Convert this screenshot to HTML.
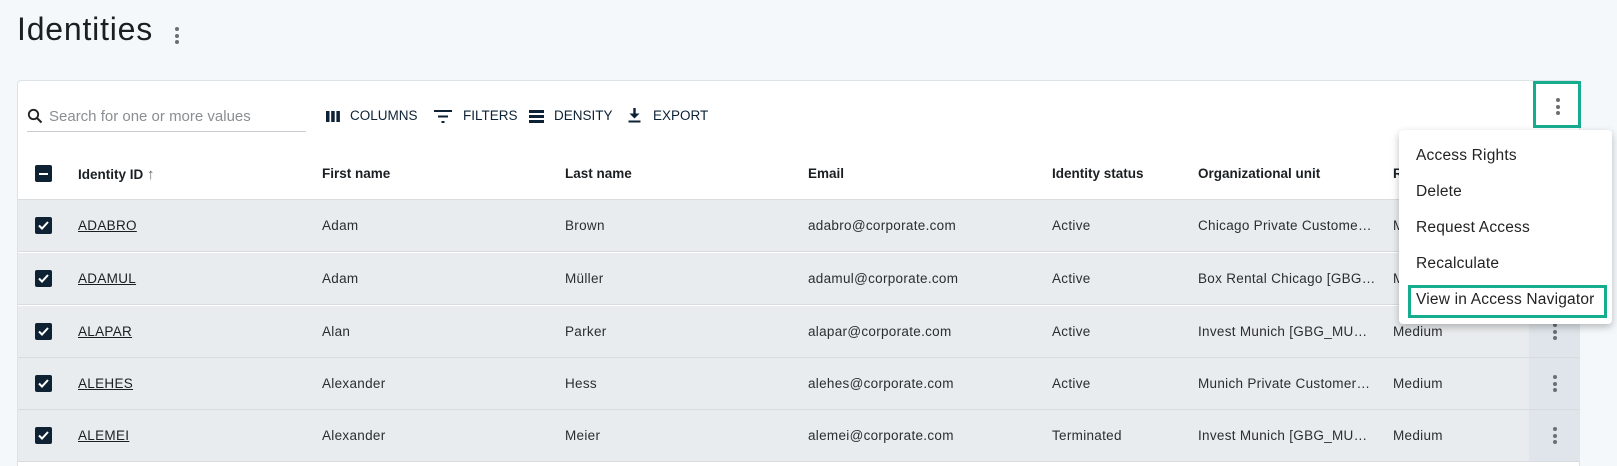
<!DOCTYPE html>
<html><head><style>
*{box-sizing:border-box;margin:0;padding:0}
html,body{width:1617px;height:466px;overflow:hidden}
body{background:#f4f8fb;font-family:"Liberation Sans",sans-serif;color:#1f2428;position:relative}
.abs{position:absolute}
h1{position:absolute;left:17px;top:11px;font-size:32px;font-weight:400;color:#1b1f22;letter-spacing:0.8px}
.card{position:absolute;left:17px;top:80px;width:1563px;height:390px;background:#fff;border:1px solid #dde2e6;border-radius:4px;overflow:hidden}
.dots{position:absolute;width:4px}
.dots i{display:block;width:4px;height:4px;border-radius:2px;background:#6b6f73;margin-bottom:2.5px}
.tb{position:absolute;top:108px;font-size:13.5px;color:#0d2235;letter-spacing:0}
.row{position:absolute;left:18px;width:1562px;height:52px;background:#e9ecee;border-bottom:1px solid #d8dcdf}
.c{position:absolute;font-size:13.5px;color:#2a2e31;top:18px;white-space:nowrap;letter-spacing:0.3px}
.hd{position:absolute;top:166px;font-size:13.5px;font-weight:bold;color:#1b1f22}
.cb{position:absolute;left:17px;top:17px;width:17px;height:17px;background:#0e2234;border-radius:2px}
.act{position:absolute;left:1511px;top:0;width:51px;height:51px;background:#dfe5ea}
.menu{position:absolute;left:1399px;top:130px;width:213px;height:194px;background:#fff;border-radius:4px;box-shadow:0 3px 8px rgba(0,0,0,.25)}
.menu div{position:absolute;left:17px;font-size:15.5px;color:#222;letter-spacing:0.2px}
</style></head><body>
<h1>Identities</h1>
<div class="dots" style="left:175px;top:27px"><i></i><i></i><i></i></div>
<div class="card"></div>
<svg class="abs" style="left:27px;top:108px" width="16" height="16" viewBox="0 0 16 16"><circle cx="6.5" cy="6.5" r="4.7" fill="none" stroke="#222" stroke-width="1.8"/><path d="M10 10l4.5 4.5" stroke="#222" stroke-width="2"/></svg>
<div class="abs" style="left:49px;top:108px;font-size:15px;color:#8a8e92">Search for one or more values</div>
<div class="abs" style="left:27px;top:131px;width:279px;height:1px;background:#c9cdd1"></div>
<svg class="abs" style="left:326px;top:111px" width="14" height="11"><rect x="0" y="0" width="3.5" height="11" fill="#0d2235"/><rect x="5.2" y="0" width="3.5" height="11" fill="#0d2235"/><rect x="10.4" y="0" width="3.5" height="11" fill="#0d2235"/></svg>
<div class="tb" style="left:350px">COLUMNS</div>
<svg class="abs" style="left:434px;top:110px" width="18" height="13"><rect x="0" y="0" width="18" height="2" fill="#0d2235"/><rect x="4" y="5.5" width="10" height="2" fill="#0d2235"/><rect x="7.5" y="11" width="3" height="2" fill="#0d2235"/></svg>
<div class="tb" style="left:463px">FILTERS</div>
<svg class="abs" style="left:529px;top:110px" width="15" height="13"><rect x="0" y="0" width="15" height="3" fill="#0d2235"/><rect x="0" y="5" width="15" height="3" fill="#0d2235"/><rect x="0" y="10" width="15" height="3" fill="#0d2235"/></svg>
<div class="tb" style="left:554px">DENSITY</div>
<svg class="abs" style="left:628px;top:108px" width="13" height="15"><path d="M6.5 0v8" stroke="#0d2235" stroke-width="2.4"/><path d="M1.5 5.5l5 5 5-5z" fill="#0d2235"/><rect x="0.5" y="12.5" width="12" height="2" fill="#0d2235"/></svg>
<div class="tb" style="left:653px">EXPORT</div>
<div class="abs" style="left:1533px;top:81px;width:48px;height:47px;border:3px solid #16ad8f"></div>
<div class="dots" style="left:1556px;top:98px"><i></i><i></i><i></i></div>
<div class="abs" style="left:35px;top:165px;width:17px;height:17px;background:#0e2234;border-radius:2px"><div style="position:absolute;left:4px;top:7.5px;width:9px;height:2px;background:#fff"></div></div>
<div class="hd" style="left:78px">Identity ID <span style="font-weight:normal;color:#666;font-size:15px">&#8593;</span></div>
<div class="hd" style="left:322px">First name</div>
<div class="hd" style="left:565px">Last name</div>
<div class="hd" style="left:808px">Email</div>
<div class="hd" style="left:1052px">Identity status</div>
<div class="hd" style="left:1198px">Organizational unit</div>
<div class="hd" style="left:1393px">Risk</div>
<div class="abs" style="left:18px;top:199px;width:1562px;height:1px;background:#d8dcdf"></div>

<div class="row" style="top:200px"><div class="cb"><svg width="17" height="17"><path d="M4 8.5l3 3 6-6.5" stroke="#fff" stroke-width="2" fill="none"/></svg></div><div class="c" style="left:60px;text-decoration:underline;color:#1b1f22">ADABRO</div><div class="c" style="left:304px">Adam</div><div class="c" style="left:547px">Brown</div><div class="c" style="left:790px">adabro@corporate.com</div><div class="c" style="left:1034px">Active</div><div class="c" style="left:1180px">Chicago Private Custome…</div><div class="c" style="left:1375px">Medium</div><div class="act"></div></div>
<div class="row" style="top:253px"><div class="cb"><svg width="17" height="17"><path d="M4 8.5l3 3 6-6.5" stroke="#fff" stroke-width="2" fill="none"/></svg></div><div class="c" style="left:60px;text-decoration:underline;color:#1b1f22">ADAMUL</div><div class="c" style="left:304px">Adam</div><div class="c" style="left:547px">Müller</div><div class="c" style="left:790px">adamul@corporate.com</div><div class="c" style="left:1034px">Active</div><div class="c" style="left:1180px">Box Rental Chicago [GBG…</div><div class="c" style="left:1375px">Medium</div><div class="act"></div></div>
<div class="row" style="top:306px"><div class="cb"><svg width="17" height="17"><path d="M4 8.5l3 3 6-6.5" stroke="#fff" stroke-width="2" fill="none"/></svg></div><div class="c" style="left:60px;text-decoration:underline;color:#1b1f22">ALAPAR</div><div class="c" style="left:304px">Alan</div><div class="c" style="left:547px">Parker</div><div class="c" style="left:790px">alapar@corporate.com</div><div class="c" style="left:1034px">Active</div><div class="c" style="left:1180px">Invest Munich [GBG_MU…</div><div class="c" style="left:1375px">Medium</div><div class="act"><div class="dots" style="left:24px;top:17px"><i></i><i></i><i></i></div></div></div>
<div class="row" style="top:358px"><div class="cb"><svg width="17" height="17"><path d="M4 8.5l3 3 6-6.5" stroke="#fff" stroke-width="2" fill="none"/></svg></div><div class="c" style="left:60px;text-decoration:underline;color:#1b1f22">ALEHES</div><div class="c" style="left:304px">Alexander</div><div class="c" style="left:547px">Hess</div><div class="c" style="left:790px">alehes@corporate.com</div><div class="c" style="left:1034px">Active</div><div class="c" style="left:1180px">Munich Private Customer…</div><div class="c" style="left:1375px">Medium</div><div class="act"><div class="dots" style="left:24px;top:17px"><i></i><i></i><i></i></div></div></div>
<div class="row" style="top:410px"><div class="cb"><svg width="17" height="17"><path d="M4 8.5l3 3 6-6.5" stroke="#fff" stroke-width="2" fill="none"/></svg></div><div class="c" style="left:60px;text-decoration:underline;color:#1b1f22">ALEMEI</div><div class="c" style="left:304px">Alexander</div><div class="c" style="left:547px">Meier</div><div class="c" style="left:790px">alemei@corporate.com</div><div class="c" style="left:1034px">Terminated</div><div class="c" style="left:1180px">Invest Munich [GBG_MU…</div><div class="c" style="left:1375px">Medium</div><div class="act"><div class="dots" style="left:24px;top:17px"><i></i><i></i><i></i></div></div></div>

<div class="menu">
<div style="top:17px">Access Rights</div>
<div style="top:53px">Delete</div>
<div style="top:89px">Request Access</div>
<div style="top:125px">Recalculate</div>
<div style="top:161px">View in Access Navigator</div>
<div style="left:9px;top:155px;width:199px;height:33px;border:3px solid #16ad8f"></div>
</div>
</body></html>
